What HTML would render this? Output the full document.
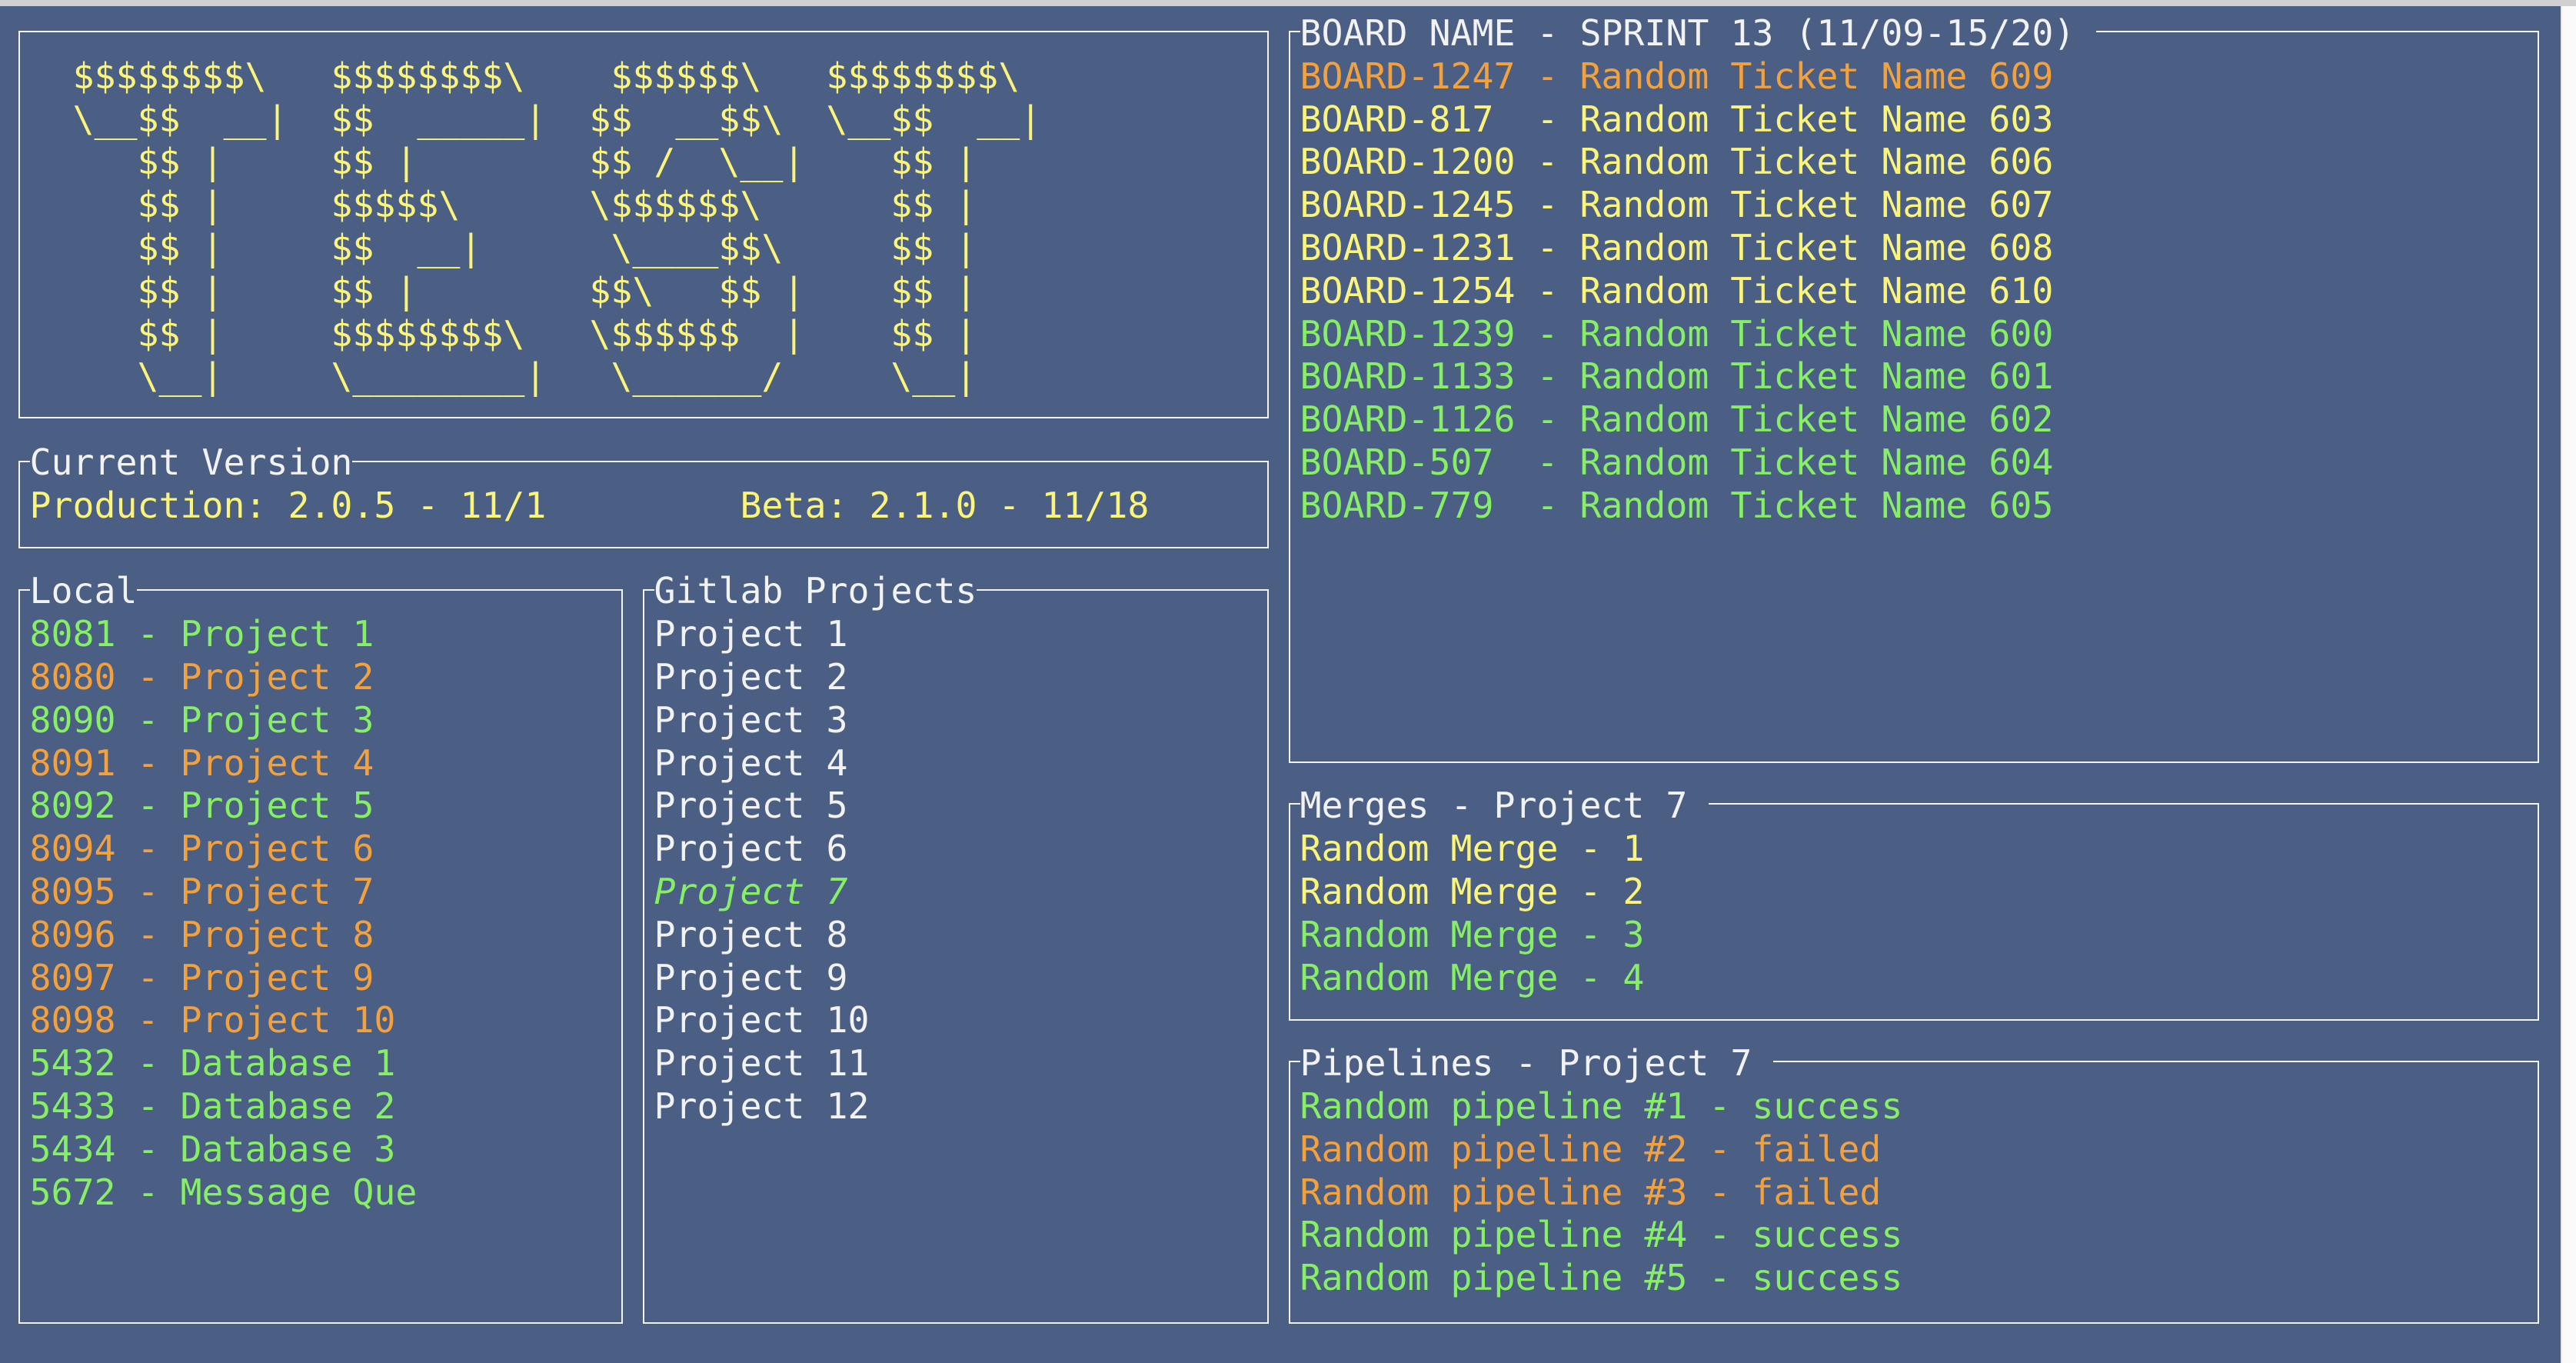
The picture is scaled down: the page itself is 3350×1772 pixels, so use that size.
<!DOCTYPE html>
<html><head><meta charset="utf-8">
<style>
html,body{margin:0;padding:0}
body{width:3350px;height:1772px;background:#4b5e84;position:relative;overflow:hidden;font-family:"DejaVu Sans Mono","Liberation Mono",monospace;font-size:46.5px}
.topbar{position:absolute;left:0;top:0;width:3350px;height:8px;background:#d0d0d0}
.rs{position:absolute;left:3330px;top:8px;width:20px;height:1764px;background:#f9f9f9;border-left:2px solid #e6e6e6;box-sizing:border-box}
.box{position:absolute;border:2px solid #f2f2f2;box-sizing:border-box}
.t{position:absolute;white-space:pre;line-height:55.8px;height:55.8px}
.ti{background:#4b5e84;color:#f2f2f2}
.y{color:#fbf47a}.o{color:#f2a13d}.g{color:#86ef66}.w{color:#f2f2f2}
</style></head><body>
<div class="topbar"></div>
<div class="rs"></div>

<div class="box" style="left:23.5px;top:40px;width:1626px;height:504px"></div>
<div class="box" style="left:23.5px;top:599px;width:1626px;height:113.6px"></div>
<div class="box" style="left:23.5px;top:766.4px;width:786px;height:954.6px"></div>
<div class="box" style="left:835.5px;top:766.4px;width:814px;height:954.6px"></div>
<div class="box" style="left:1675.5px;top:40px;width:1626px;height:951.6px"></div>
<div class="box" style="left:1675.5px;top:1044.4px;width:1626px;height:283px"></div>
<div class="box" style="left:1675.5px;top:1379.2px;width:1626px;height:341.8px"></div>

<div id="c"></div>
<script>
var X=function(c){return 10.5+28*c},Y=function(r){return 16+55.8*r};
var h='';
function L(c,r,cls,txt,extra){h+='<div class="t '+cls+'" style="left:'+X(c)+'px;top:'+Y(r)+'px;'+(extra||'')+'">'+txt.replace(/&/g,'&amp;').replace(/</g,'&lt;')+'</div>';}
var art=[
"   $$$$$$$$\\   $$$$$$$$\\    $$$$$$\\   $$$$$$$$\\",
"   \\__$$  __|  $$  _____|  $$  __$$\\  \\__$$  __|",
"      $$ |     $$ |        $$ /  \\__|    $$ |",
"      $$ |     $$$$$\\      \\$$$$$$\\      $$ |",
"      $$ |     $$  __|      \\____$$\\     $$ |",
"      $$ |     $$ |        $$\\   $$ |    $$ |",
"      $$ |     $$$$$$$$\\   \\$$$$$$  |    $$ |",
"      \\__|     \\________|   \\______/     \\__|"];
art.forEach(function(s,i){L(0,1+i,'y',s);});
L(1,10,'ti','Current Version');
L(1,11,'y','Production: 2.0.5 - 11/1');
L(34,11,'y','Beta: 2.1.0 - 11/18');
L(1,13,'ti','Local');
[['g','8081 - Project 1'],['o','8080 - Project 2'],['g','8090 - Project 3'],['o','8091 - Project 4'],['g','8092 - Project 5'],['o','8094 - Project 6'],['o','8095 - Project 7'],['o','8096 - Project 8'],['o','8097 - Project 9'],['o','8098 - Project 10'],['g','5432 - Database 1'],['g','5433 - Database 2'],['g','5434 - Database 3'],['g','5672 - Message Que']].forEach(function(a,i){L(1,14+i,a[0],a[1]);});
L(30,13,'ti','Gitlab Projects');
for(var i=1;i<=12;i++){ if(i==7)L(30,13+i,'g','Project 7','font-style:italic'); else L(30,13+i,'w','Project '+i);}
L(60,0,'ti','BOARD NAME - SPRINT 13 (11/09-15/20) ');
[['o','BOARD-1247 - Random Ticket Name 609'],['y','BOARD-817  - Random Ticket Name 603'],['y','BOARD-1200 - Random Ticket Name 606'],['y','BOARD-1245 - Random Ticket Name 607'],['y','BOARD-1231 - Random Ticket Name 608'],['y','BOARD-1254 - Random Ticket Name 610'],['g','BOARD-1239 - Random Ticket Name 600'],['g','BOARD-1133 - Random Ticket Name 601'],['g','BOARD-1126 - Random Ticket Name 602'],['g','BOARD-507  - Random Ticket Name 604'],['g','BOARD-779  - Random Ticket Name 605']].forEach(function(a,i){L(60,1+i,a[0],a[1]);});
L(60,18,'ti','Merges - Project 7 ');
[['y','Random Merge - 1'],['y','Random Merge - 2'],['g','Random Merge - 3'],['g','Random Merge - 4']].forEach(function(a,i){L(60,19+i,a[0],a[1]);});
L(60,24,'ti','Pipelines - Project 7 ');
[['g','Random pipeline #1 - success'],['o','Random pipeline #2 - failed'],['o','Random pipeline #3 - failed'],['g','Random pipeline #4 - success'],['g','Random pipeline #5 - success']].forEach(function(a,i){L(60,25+i,a[0],a[1]);});
document.getElementById('c').innerHTML=h;
</script>
</body></html>
